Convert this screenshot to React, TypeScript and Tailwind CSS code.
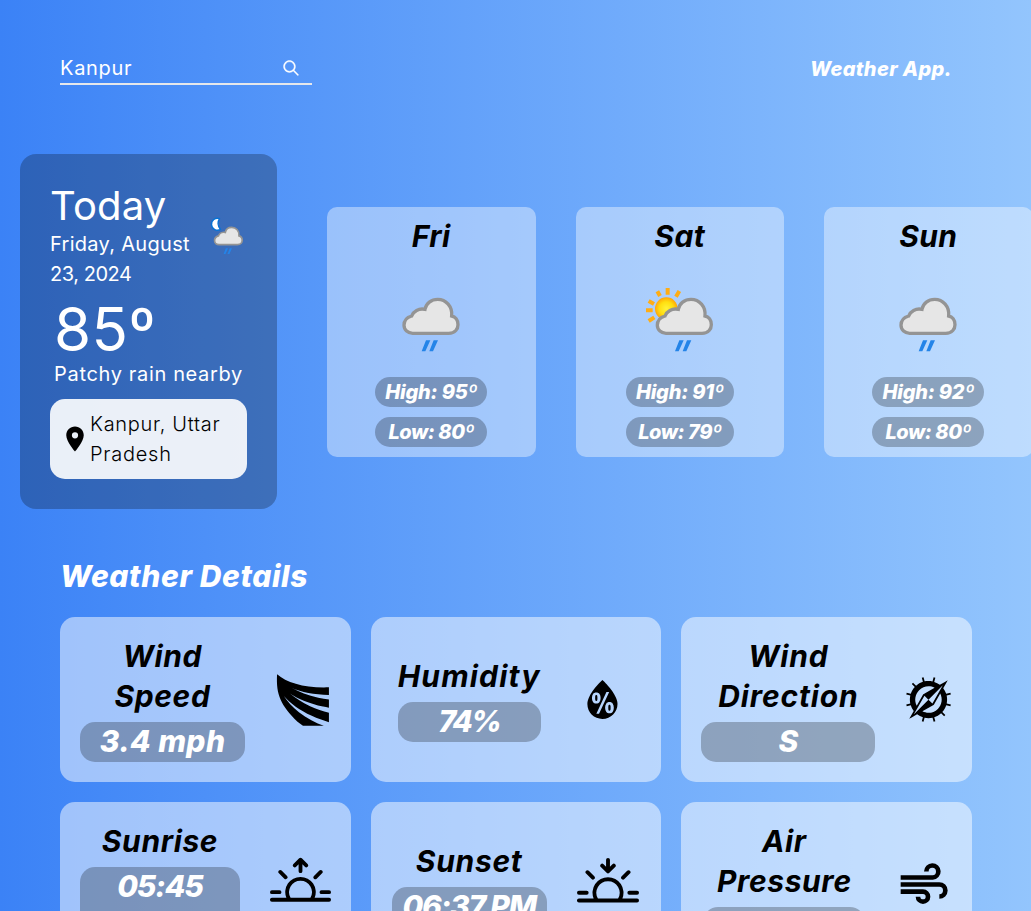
import type { ReactNode } from 'react';
import { WiHumidity } from 'react-icons/wi';
import { BsSunrise, BsSunset } from 'react-icons/bs';
import { GiCompass, GiWindyStripes } from 'react-icons/gi';
import { MdLocationOn } from 'react-icons/md';
import { IoIosSearch } from 'react-icons/io';

const CLOUD =
  'M68 160H176C196 160 204 146 204 134C204 120 196 110 185 108C188 80 168 58 143 58C124 58 108 70 105 88C86 84 70 94 65 108C50 112 42 122 42 136C42 150 54 160 68 160Z';

function Cloud() {
  return (
    <g>
      <path d={CLOUD} fill="#e6e6e6" stroke="#949494" strokeWidth="10" />
      <path d="M95 214h11l15-33h-13zM118 214h11l15-33h-13z" fill="#2484e8" />
    </g>
  );
}

function RainIcon() {
  return (
    <svg width="90" height="90" viewBox="0 0 90 90">
      <g transform="translate(4 3) scale(.3333)">
        <Cloud />
      </g>
    </svg>
  );
}

function SunRainIcon() {
  return (
    <svg width="90" height="90" viewBox="0 0 90 90">
      <defs>
        <radialGradient id="sun">
          <stop offset="0" stopColor="#fff23a" />
          <stop offset="0.6" stopColor="#ffdf10" />
          <stop offset="1" stopColor="#ffa60a" />
        </radialGradient>
      </defs>
      <g transform="translate(0 3) scale(.3333)">
        <circle cx="94" cy="86" r="34" fill="url(#sun)" />
        <path
          d="M98 24v20M67 34l8 14M133 33l-10 17M41 63l16 9M33 91h20M41 123l17-11"
          stroke="#ffad14"
          strokeWidth="12"
        />
        <g transform="translate(25 0)">
          <Cloud />
        </g>
      </g>
    </svg>
  );
}

function MoonRainIcon() {
  return (
    <svg width="50" height="50" viewBox="0 0 50 50" className="shrink-0">
      <path
        d="M22.5 6.6A6 6 0 1 0 23.5 17.4C20.5 14 20.5 9.5 22.5 6.6Z"
        fill="#fff"
        stroke="#0872d4"
        strokeWidth="1.5"
        strokeLinejoin="round"
      />
      <g transform="translate(10.4 5.4) scale(.1706)">
        <Cloud />
      </g>
    </svg>
  );
}

function AirIcon() {
  return (
    <svg width="50" height="46" viewBox="26 34.5 150 138" fill="none" stroke="currentColor" strokeWidth="14">
      <path d="M31 81H127A18 18 0 1 0 108 63M31 102H147a18 18 0 0 1 0 36M31 123.500H98a15 15 0 1 1-15 15" />
    </svg>
  );
}

function DayCard({ day, icon, high, low }: { day: ReactNode; icon: ReactNode; high: string; low: string }) {
  return (
    <div className="flex h-[250px] w-[208.5px] shrink-0 flex-col items-center rounded-[10px] bg-white/40 p-[10px] italic">
      <h2 className="-mt-px mb-px text-[30px] leading-10 font-bold tracking-[0.4px] text-black">{day}</h2>
      <div className="mt-5 mb-[10px]">{icon}</div>
      <div className="flex flex-col gap-[10px] text-center text-[20px] leading-[30px] font-extrabold text-white">
        <p className="rounded-full bg-black/25 px-[10px] tracking-[-0.2px]">High: {high}</p>
        <p className="rounded-full bg-black/25 px-[10px] tracking-[-0.45px]">Low: {low}</p>
      </div>
    </div>
  );
}

interface DetailProps {
  title: ReactNode;
  value: ReactNode;
  icon: ReactNode;
  column: string;
  pad: string;
}

function DetailCard({ title, value, icon, column, pad }: DetailProps) {
  return (
    <div className={`flex h-[165px] items-center justify-between rounded-[15px] bg-white/50 ${pad}`}>
      <div className={`flex shrink-0 flex-col gap-[5px] text-center text-[30px] leading-10 italic ${column}`}>
        <h3 className="-mt-px mb-px font-bold text-black">{title}</h3>
        <p className="rounded-[15px] bg-black/25 font-extrabold text-white">
          <span className="-mt-px mb-px block">{value}</span>
        </p>
      </div>
      <div className="flex shrink-0 justify-center text-black">{icon}</div>
    </div>
  );
}

export default function App() {
  return (
    <div className="h-[911px] w-full overflow-hidden bg-linear-to-r from-[#3b82f6] to-[#93c5fd] font-['Inter',sans-serif] text-white">
      <header className="flex items-start justify-between pt-[53px] pr-[79px] pl-[60px]">
        <div className="flex w-[252px] items-center justify-between border-b-2 border-[#e5e7eb] pr-[11px] text-[20px] leading-[30px]">
          <span className="tracking-[0.7px]">Kanpur</span>
          <IoIosSearch size={20} stroke="currentColor" strokeWidth={10} />
        </div>
        <div className="text-[20px] leading-8 font-extrabold tracking-[0.35px] italic">Weather App.</div>
      </header>

      <section className="mt-[69px] flex items-center gap-[50px] pl-5">
        <div className="h-[355px] w-[257px] shrink-0 rounded-[16px] bg-black/25 p-[30px]">
          <div className="flex items-center justify-between">
            <div className="w-[147px]">
              <h1 className="-mt-px mb-px text-[40px] leading-[45px] tracking-[0.2px]">Today</h1>
              <p className="text-[20px] leading-[30px]">
                <span className="tracking-[0.3px]">Friday, August</span>
                <br />
                <span className="tracking-[-0.45px]">23, 2024</span>
              </p>
            </div>
            <MoonRainIcon />
          </div>
          <div className="pt-[10px] pl-1 text-[60px] leading-[60px] tracking-[0.5px]">85º</div>
          <p className="text-center text-[20px] leading-[30px] tracking-[0.65px] whitespace-nowrap">Patchy rain nearby</p>
          <div className="mt-[10px] flex h-20 items-center rounded-[15px] bg-white/90 pl-[10px] text-black">
            <MdLocationOn size={30} className="shrink-0" />
            <p className="text-[20px] leading-[30px] font-light whitespace-nowrap">
              <span className="tracking-[0.7px]">Kanpur, Uttar</span>
              <br />
              <span className="tracking-[0.75px]">Pradesh</span>
            </p>
          </div>
        </div>
        <div className="flex gap-10">
          <DayCard day="Fri" icon={<RainIcon />} high="95º" low="80º" />
          <DayCard day="Sat" icon={<SunRainIcon />} high="91º" low="79º" />
          <DayCard day="Sun" icon={<RainIcon />} high="92º" low="80º" />
        </div>
      </section>

      <section className="mt-12 pr-[59px] pl-[60px]">
        <h2 className="-mt-px text-[30px] leading-10 font-extrabold tracking-[0.6px] italic">Weather Details</h2>
        <div className="mt-[21px] grid grid-cols-3 gap-5">
          <DetailCard
            title={<span className="tracking-[0.6px]">Wind<br />Speed</span>}
            value={<span className="tracking-[0.4px]">3.4 mph</span>}
            icon={<GiWindyStripes size={56} />}
            column="w-[165px]"
            pad="pl-5 pr-5"
          />
          <DetailCard
            title={<span className="tracking-[1.2px]">Humidity</span>}
            value={<span className="tracking-[-2px]">74%</span>}
            icon={<WiHumidity size={61} />}
            column="w-[143px]"
            pad="pl-[27px] pr-[28px]"
          />
          <DetailCard
            title={<span className="tracking-[0.8px]">Wind<br />Direction</span>}
            value="S"
            icon={<GiCompass size={49} />}
            column="w-[174px]"
            pad="pl-5 pr-[19px]"
          />
          <DetailCard
            title={<span className="tracking-[0.6px]">Sunrise</span>}
            value={<span className="tracking-[-1.1px]">05:45<br />AM</span>}
            icon={<BsSunrise size={61} />}
            column="w-[160px]"
            pad="pl-5 pr-5"
          />
          <DetailCard
            title={<span className="tracking-[0.7px]">Sunset</span>}
            value={<span className="tracking-[-1.2px]">06:37 PM</span>}
            icon={<BsSunset size={62} />}
            column="w-[155px]"
            pad="pl-[21px] pr-[22px]"
          />
          <DetailCard
            title={<span className="tracking-[0.6px]">Air<br />Pressure</span>}
            value="29.5 in"
            icon={<AirIcon />}
            column="w-[162px]"
            pad="pl-[22px] pr-[23px]"
          />
        </div>
      </section>
    </div>
  );
}
